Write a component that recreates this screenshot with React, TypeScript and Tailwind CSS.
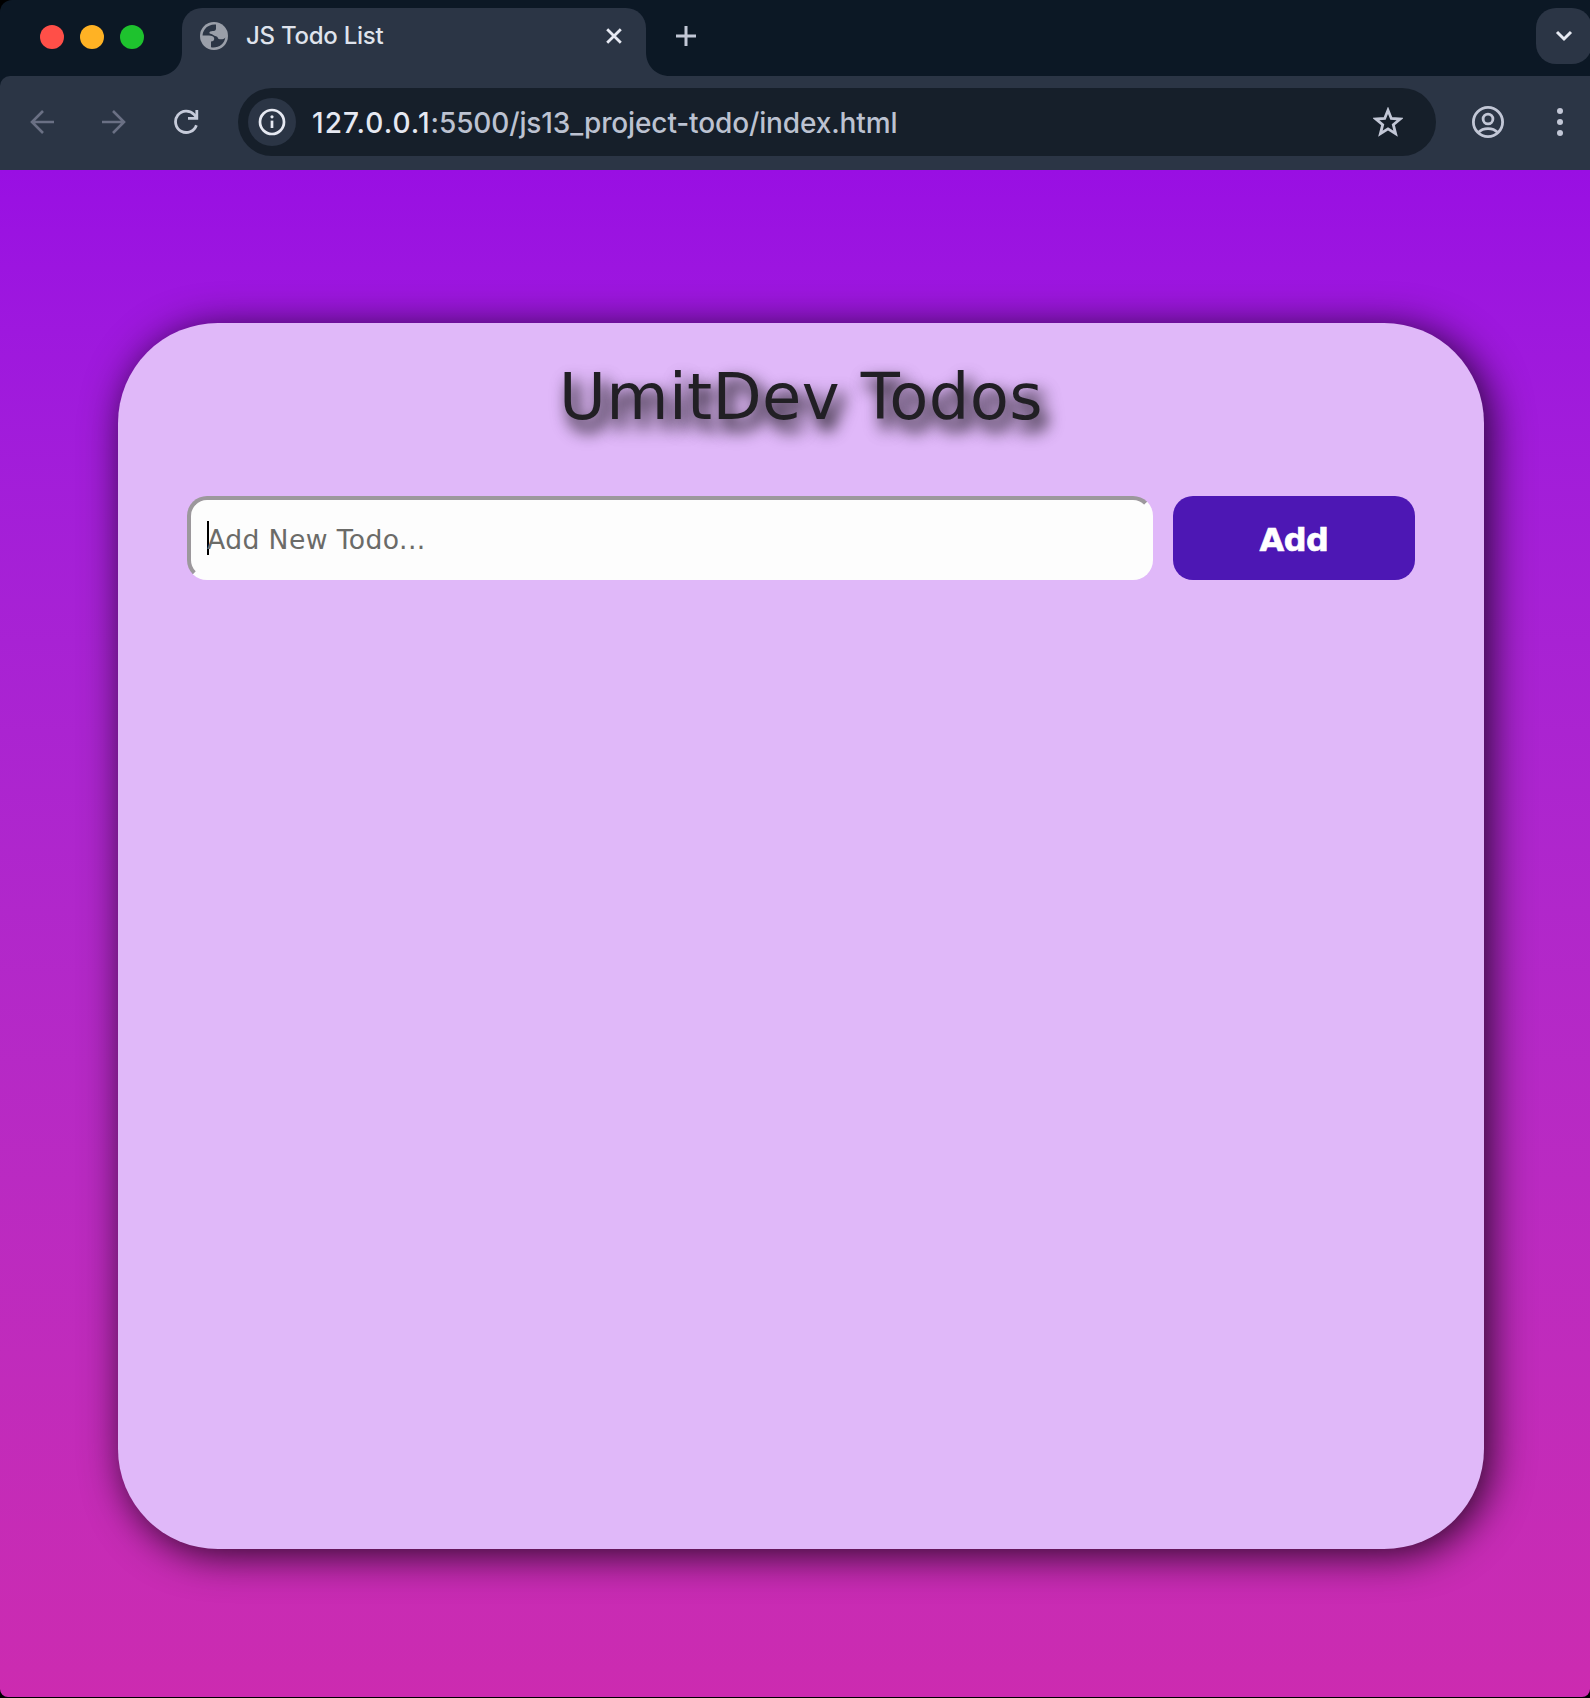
import { ReactNode } from "react";

function Glyph({ size, className = "", children }: { size: number; className?: string; children: ReactNode }) {
  return (
    <svg width={size} height={size} viewBox={`0 0 ${size} ${size}`} fill="none" className={`shrink-0 ${className}`}>
      {children}
    </svg>
  );
}

function Globe() {
  return (
    <Glyph size={28}>
      <circle cx="14" cy="14" r="14" fill="#9a9fa9" />
      <path
        d="M16 2.6C12 2.2 7.5 3.6 4.8 7.2C3.2 9.4 2.6 11.6 2.6 13.6H9C11.6 13.6 14 14.4 14.2 16.4C14.4 18.6 13 19.2 11 19.4V25.2C18 26.4 24.6 22 25.3 15.4C23.4 17.8 20.8 17.4 18.6 17C17.6 16.2 18 14.6 16 14.2C13.6 13.8 12.8 12.2 10.6 11.8C8.8 11.4 9.2 9.4 11 9.2C13 9.2 16 9.4 16 6.6Z"
        fill="#2b3545"
      />
    </Glyph>
  );
}

function TabStrip() {
  return (
    <div className="flex h-[76px] bg-[#0c1825]">
      <div className="flex w-[182px] items-center gap-4 pb-0.5 pl-10">
        <span className="size-6 rounded-full bg-[#ff4f48]" />
        <span className="size-6 rounded-full bg-[#ffb224]" />
        <span className="size-6 rounded-full bg-[#1ec22e]" />
      </div>
      <div className="relative mt-2 flex w-[464px] rounded-t-[20px] bg-[#2b3545] pl-[18px]">
        <svg width="24" height="24" viewBox="0 0 24 24" className="absolute bottom-0 -left-6 fill-[#2b3545]">
          <path d="M24 0V24H0C14 24 24 14 24 0Z" />
        </svg>
        <svg width="24" height="24" viewBox="0 0 24 24" className="absolute -right-6 bottom-0 fill-[#2b3545]">
          <path d="M0 0V24H24C10 24 0 14 0 0Z" />
        </svg>
        <div className="flex h-14 flex-1 items-center">
          <Globe />
          <span className="ml-[18px] flex-1 text-[24px] font-medium tracking-[-0.26px] text-[#dfe3ec]">JS Todo List</span>
          <Glyph size={16} className="mr-6">
            <path d="M1.2 1.2L14.8 14.8M14.8 1.2L1.2 14.8" stroke="#e6e9f2" strokeWidth="2.8" />
          </Glyph>
        </div>
      </div>
      <div className="flex h-[72px] flex-1 items-center justify-between pl-[30px]">
        <Glyph size={20}>
          <path d="M10 0V20M0 10H20" stroke="#c2c7d6" strokeWidth="3" />
        </Glyph>
        <div className="-mr-0.5 flex size-14 items-center justify-center rounded-[20px] bg-[#2b3545]">
          <Glyph size={18}>
            <path d="M2 5L9 12L16 5" stroke="#e6e9f2" strokeWidth="3" />
          </Glyph>
        </div>
      </div>
    </div>
  );
}

function Toolbar() {
  return (
    <div className="bg-[#0c1825]">
      <div className="flex h-[94px] items-center rounded-tl-[10px] bg-[#2b3545] pb-0.5 pl-[30px]">
        <Glyph size={24}>
          <path d="M24 12H2M13 1L2 12L13 23" stroke="#6a7084" strokeWidth="2.6" />
        </Glyph>
        <Glyph size={24} className="ml-12">
          <path d="M0 12H22M11 1L22 12L11 23" stroke="#6a7084" strokeWidth="2.6" />
        </Glyph>
        <Glyph size={26} className="ml-[47px]">
          <path d="M23.4 16.2A10.7 10.7 0 1 1 21.2 5.6L24 9" stroke="#c6cbda" strokeWidth="2.8" />
          <path d="M23.8 1V9.4H15" stroke="#c6cbda" strokeWidth="2.8" />
        </Glyph>
        <div className="ml-[39px] flex h-[68px] w-[1198px] items-center rounded-full bg-[#161f2a] pr-[33px] pl-2.5">
          <div className="flex size-12 items-center justify-center rounded-full bg-[#2b3545]">
            <Glyph size={28}>
              <circle cx="14" cy="14" r="12" stroke="#e6e9f2" strokeWidth="2.7" />
              <path d="M14 12.6V20" stroke="#e6e9f2" strokeWidth="2.7" />
              <circle cx="14" cy="8.8" r="1.6" fill="#e6e9f2" />
            </Glyph>
          </div>
          <span className="mt-0.5 ml-4 flex-1 text-[28px] font-medium tracking-[-0.13px] whitespace-nowrap text-[#bcc2d1]">
            <span className="tracking-[1.05px] text-[#e6e9f2]">127.0.0.1</span>:5500/js13_project-todo/index.html
          </span>
          <Glyph size={30}>
            <path
              d="M15 3.2L18.3 11.4L27.2 12L20.3 17.7L22.6 26.6L15 21.8L7.4 26.6L9.7 17.7L2.8 12L11.7 11.4Z"
              stroke="#c2c7d6"
              strokeWidth="2.8"
            />
          </Glyph>
        </div>
        <Glyph size={32} className="ml-9">
          <circle cx="16" cy="16" r="14.6" stroke="#c2c7d6" strokeWidth="2.8" />
          <circle cx="16" cy="13" r="4.9" stroke="#c2c7d6" strokeWidth="2.8" />
          <path d="M6.4 26.4C9 23.6 12 22.6 16 22.6C20 22.6 23 23.6 25.6 26.4" stroke="#c2c7d6" strokeWidth="2.8" />
        </Glyph>
        <div className="ml-[53px] flex flex-col gap-[5px]">
          <span className="size-1.5 rounded-full bg-[#c2c7d6]" />
          <span className="size-1.5 rounded-full bg-[#c2c7d6]" />
          <span className="size-1.5 rounded-full bg-[#c2c7d6]" />
        </div>
      </div>
    </div>
  );
}

export default function App() {
  return (
    <div className="h-[1698px] w-[1590px] bg-black font-[Inter,sans-serif]">
      <div className="flex h-[1697px] flex-col overflow-hidden rounded-tl-[12px] rounded-b-[8px]">
        <TabStrip />
        <Toolbar />
        <main className="flex-1 bg-linear-to-b from-[#990fe3] to-[#cc2bb0] pt-[153px] pl-[118px] font-['DejaVu_Sans',sans-serif]">
          <section className="h-[1226px] w-[1366px] rounded-[100px] bg-[#e0b8f9] px-[69px] pt-[37px] shadow-[6px_6px_40px_0px_rgba(0,0,0,0.8)]">
            <h1 className="text-center text-[64px] leading-[75px] tracking-[0.35px] text-[#211f24] [text-shadow:6px_10px_16px_rgba(0,0,0,1),6px_10px_20px_rgba(0,0,0,0.35)]">
              UmitDev Todos
            </h1>
            <form className="mt-[61px] flex gap-5">
              <div className="flex h-[84px] w-[966px] items-center rounded-[20px] border-4 border-t-[#9c989c] border-r-[#fdfdfd] border-b-[#fdfdfd] border-l-[#9c989c] bg-[#fdfdfd] pl-4">
                <span className="-mr-0.5 h-[34px] w-0.5 bg-black" />
                <span className="mt-1 text-[26.67px] tracking-[0.38px] text-[#6b6b68]">Add New Todo...</span>
              </div>
              <button className="h-[84px] w-[242px] rounded-[20px] bg-[#4d17b4] pt-[3px] text-[32px] font-bold tracking-[-0.6px] text-white [-webkit-text-stroke:0.6px_white]">
                Add
              </button>
            </form>
          </section>
        </main>
      </div>
    </div>
  );
}
